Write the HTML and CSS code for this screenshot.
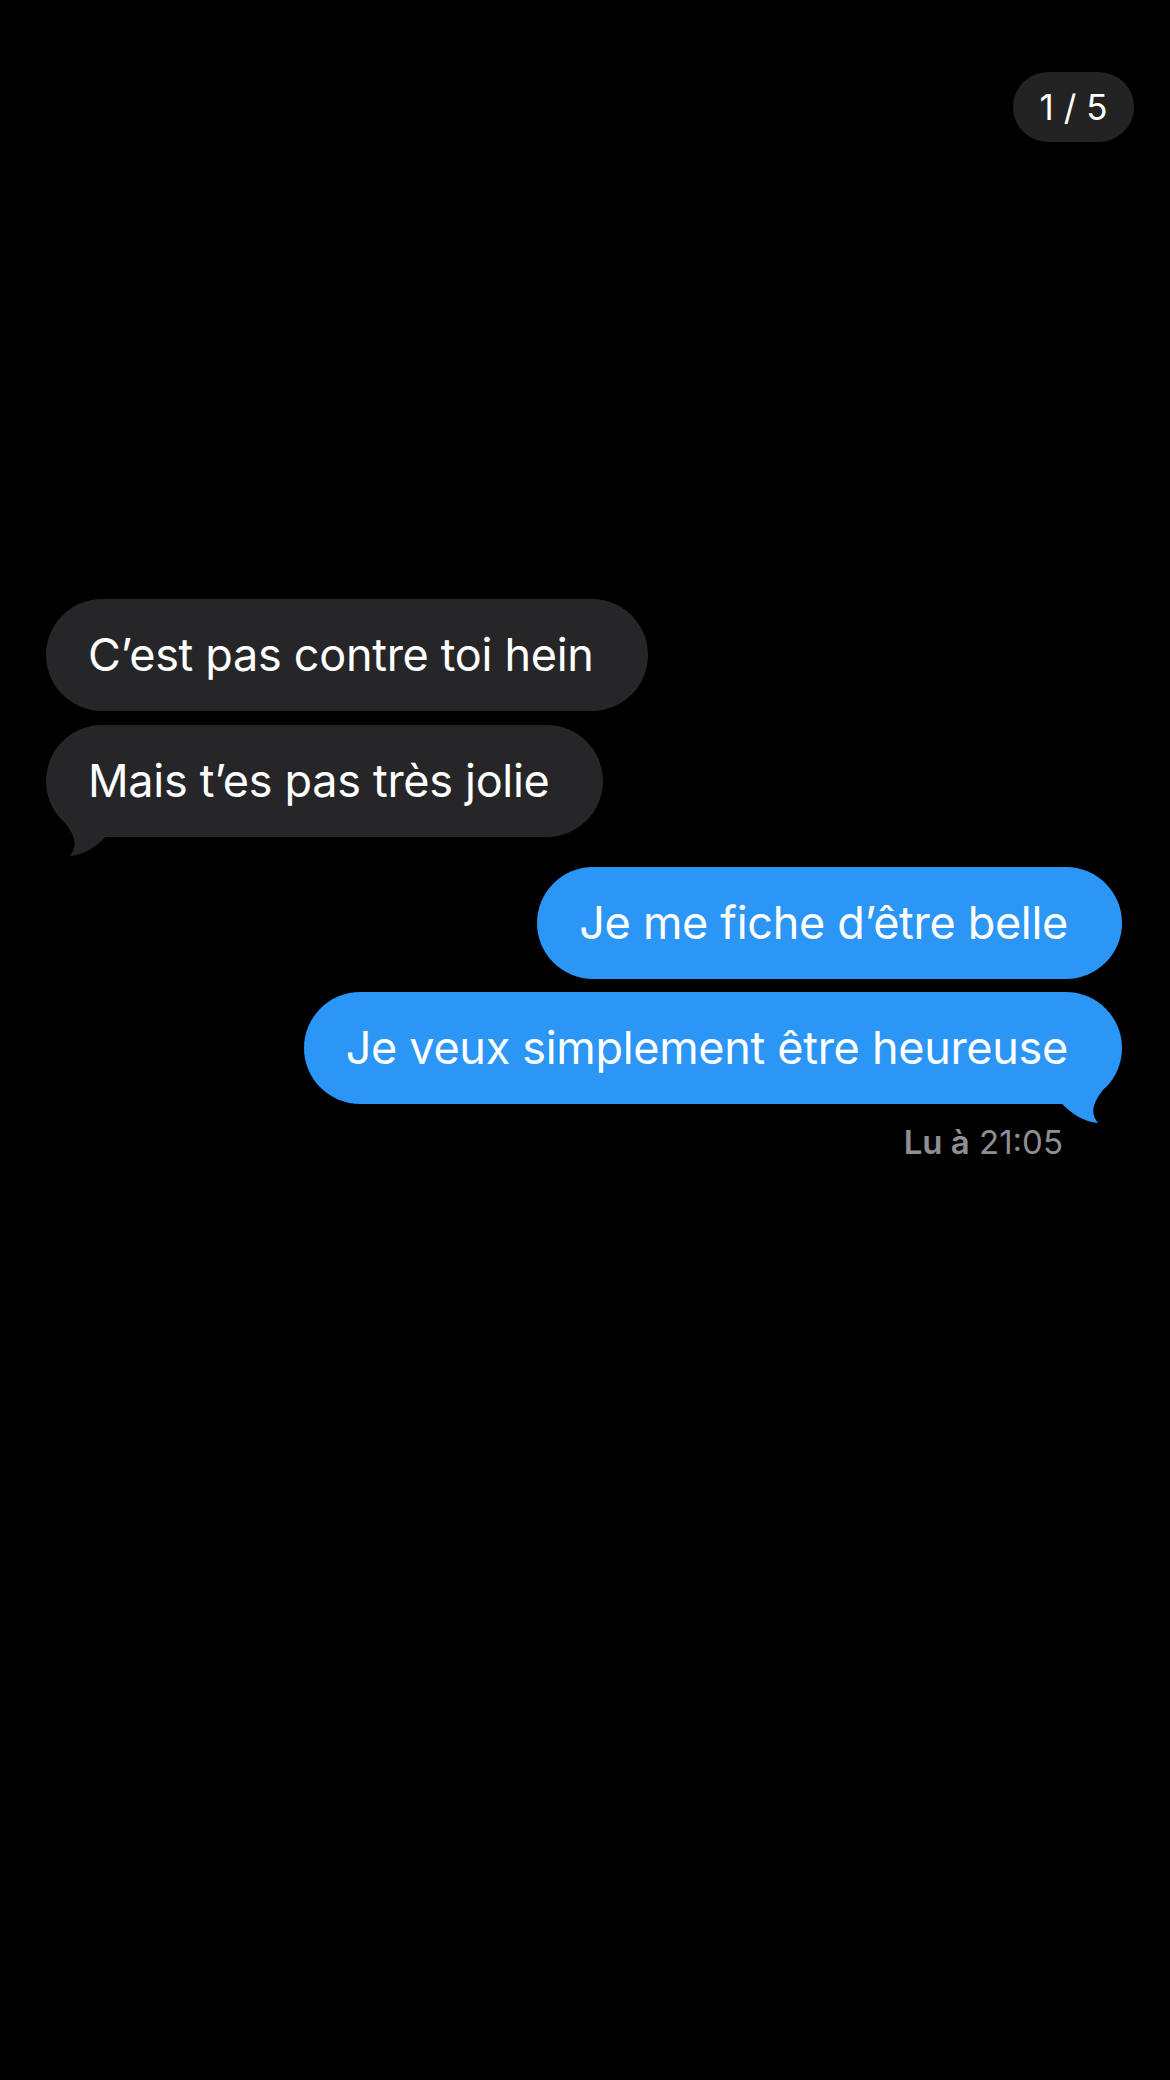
FILE: index.html
```html
<!DOCTYPE html>
<html lang="fr">
<head>
    <meta charset="UTF-8">
    <meta name="viewport" content="width=device-width, initial-scale=1.0">
    <title>Messages</title>
    <link rel="stylesheet" href="styles.css">
</head>
<body>

<div class="screen">
    <div class="top-bar">
        <span class="counter">1 / 5</span>
    </div>

    <div class="thread">
        <div class="bubble received">C’est pas contre toi hein</div>
        <div class="bubble received">
            Mais t’es pas très jolie
            <svg class="tail" viewBox="0 0 70 60"><path d="M18,24 C26,36 34,46 24,59 C38,58 50,50 62,38 L56,28 Z"/></svg>
        </div>
        <div class="bubble sent">Je me fiche d’être belle</div>
        <div class="bubble sent">
            Je veux simplement être heureuse
            <svg class="tail" viewBox="0 0 70 60"><path d="M18,24 C26,36 34,46 24,59 C38,58 50,50 62,38 L56,28 Z"/></svg>
        </div>
        <div class="receipt"><b>Lu à</b> 21:05</div>
    </div>
</div>

</body>
</html>
```

FILE: styles.css
```css
body {
    margin: 0;
    background: #000;
    color: #fff;
    font-family: Inter, "Liberation Sans", sans-serif;
}

.screen {
    height: 2080px;
    display: flex;
    flex-direction: column;
}

.top-bar {
    display: flex;
    justify-content: flex-end;
    padding: 72px 36px 0 0;
}

.counter {
    width: 121px;
    height: 70px;
    border-radius: 35px;
    background: #232323;
    font-size: 35px;
    display: flex;
    align-items: center;
    justify-content: center;
}

/* fil de messages */
.thread {
    display: flex;
    flex-direction: column;
    margin-top: 457px;
    padding: 0 48px 0 46px;
}

.bubble {
    position: relative;
    font-size: 45px;
    line-height: 56px;
    letter-spacing: -0.3px;
    padding: 28px 54px 28px 42px;
    border-radius: 56px;
}

.bubble + .bubble {
    margin-top: 14px;
}

.received {
    align-self: flex-start;
    background: #262628;
    color: #fff;
}

.sent {
    align-self: flex-end;
    background: #2b96f6;
}

.received + .sent {
    margin-top: 30px;
}

.sent + .sent {
    margin-top: 13px;
}

.tail {
    position: absolute;
    bottom: -20px;
    width: 70px;
    height: 60px;
}

.received .tail {
    left: 0;
    fill: #262628;
}

.sent .tail {
    right: 0;
    fill: #2b96f6;
    transform: scaleX(-1);
}

.receipt {
    align-self: flex-end;
    margin: 18px 59px 0 0;
    font-size: 33px;
    line-height: 40px;
    color: #8e8e93;
}

.receipt b {
    font-weight: 600;
}
```
